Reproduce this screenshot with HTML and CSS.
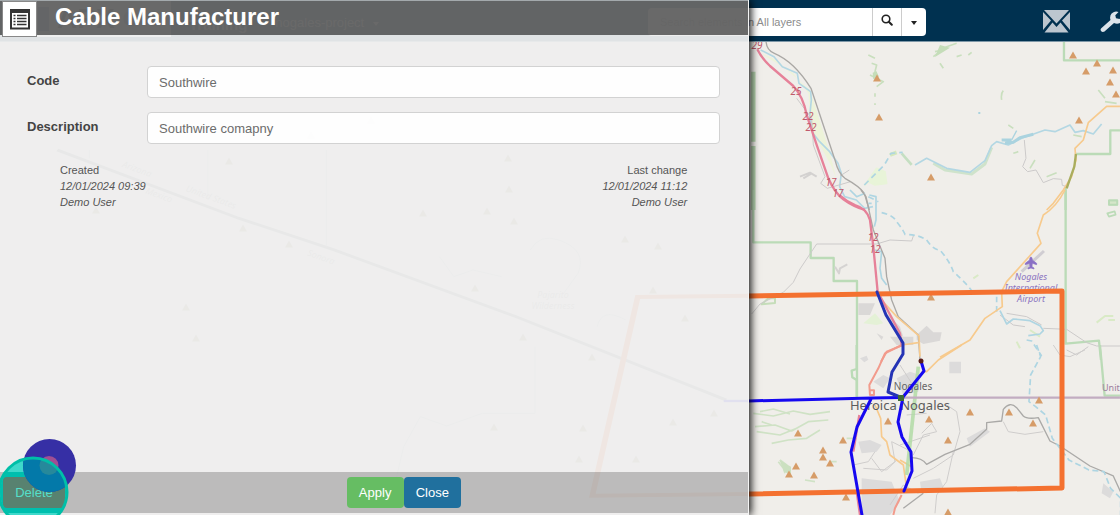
FILE: index.html
```html
<!DOCTYPE html>
<html lang="en">
<head>
<meta charset="utf-8">
<title>Cable Manufacturer</title>
<link rel="stylesheet" href="styles.css">
</head>
<body>
<div class="app">
  <header class="topbar">
    <div class="logo"><span class="logo-mark"></span><span class="logo-name">APX</span><span class="logo-sub">GIS</span></div>
    <a class="nav-link nav-strong" href="#">Training</a>
    <a class="nav-link" href="#">nogales-project <span class="caret"></span></a>
    <form class="search">
      <input class="search-input" type="text" aria-label="Search" placeholder="Search elements in All layers">
      <button class="search-btn" type="button" aria-label="Search"><svg width="12" height="12" viewBox="0 0 12 12"><circle cx="5" cy="5" r="3.8" fill="none" stroke="#222" stroke-width="1.6"/><path d="M7.8 7.8l3 3" stroke="#222" stroke-width="2" stroke-linecap="round"/></svg></button>
      <button class="search-btn search-more" type="button" aria-label="Choose layer"><span class="caret"></span></button>
    </form>
    <nav class="tools">
      <button class="tool" type="button" aria-label="Messages"><svg width="27" height="23" viewBox="0 0 27 23"><path fill="#bcc6cf" d="M1 0h25L13.500 13.500zM0 2l8 8.500L0 20zM27 2l-8 8.500L27 20zM1.500 22.500L9.500 12.500l4 4.500 4-4.500 8 10z"/></svg></button>
      <button class="tool" type="button" aria-label="Settings"><svg width="20" height="22" viewBox="0 0 20 22"><path fill="#dbe3ea" d="M1 17.500L10.500 9Q9 3.500 13.500 1.200Q16 0 18.500 1L15.300 4.300L16 7.300L19.500 8L20 7.500V12Q17 13.400 14 12L4.500 20.500Q2.500 21.500 1 20Q0 18.800 1 17.500z"/></svg></button>
    </nav>
  </header>

  <main class="map">
    <svg class="map-canvas" viewBox="0 42 1120 473" preserveAspectRatio="xMidYMid slice" role="img" aria-label="Map of Nogales">
      <defs><path id="peak" d="M-4 3.500L0-3.500L4 3.500z"/></defs>
      <rect y="42" width="1120" height="473" fill="#f0eeea"/>

      <!-- western area -->
      <g transform="translate(0 150) scale(.4777 .3333)" fill="none" stroke="#bbb">
        <path d="M120 0L500 205L700 300L1080 500L1520 750" stroke="#888" stroke-width="8"/>
        <path d="M187 0v25M435 0v150M683 0v290M1120 590v200h-110l-75 38-55-28-35 90-18 110M1110 300q20-50 60-30 60 30 40 100l-30 60M920 320l30 60 40-20 60 20M1250 530q10-60 60-20" stroke-width="2"/>
        <path d="M1568 437L1335 441L1240 1037L1568 1032" stroke="#f96b2b" stroke-width="12"/>
        <path d="M1515 753h53" stroke="#1208f0" stroke-width="7"/>
      </g>
      <g fill="#a9926f">
        <use href="#peak" x="229" y="161"/><use href="#peak" x="243" y="228"/><use href="#peak" x="289" y="244"/><use href="#peak" x="186" y="307"/><use href="#peak" x="196" y="338"/><use href="#peak" x="508" y="158"/><use href="#peak" x="509" y="189"/><use href="#peak" x="423" y="213"/><use href="#peak" x="487" y="211"/><use href="#peak" x="514" y="221"/><use href="#peak" x="625" y="239"/><use href="#peak" x="658" y="246"/><use href="#peak" x="475" y="288"/><use href="#peak" x="523" y="337"/><use href="#peak" x="592" y="357"/><use href="#peak" x="653" y="290"/><use href="#peak" x="685" y="318"/><use href="#peak" x="494" y="427"/><use href="#peak" x="583" y="428"/><use href="#peak" x="673" y="422"/><use href="#peak" x="579" y="459"/><use href="#peak" x="636" y="459"/><use href="#peak" x="714" y="413"/><use href="#peak" x="96" y="210"/><use href="#peak" x="371" y="120"/><use href="#peak" x="311" y="135"/>
      </g>
      <g class="area-label">
        <text transform="translate(136 172) rotate(20)">Arizona</text>
        <text transform="translate(210 200) rotate(20)">United States</text>
        <text transform="translate(158 198) rotate(20)">Mexico</text>
        <text transform="translate(320 260) rotate(20)">Sonora</text>
        <text x="553" y="298">Pajarito</text><text x="553" y="309">Wilderness</text>
      </g>

      <!-- northern part of the valley -->
      <g transform="translate(740 40) scale(.3333)" fill="none" stroke-linejoin="round">
        <path d="M62 40L160 100L205 160L215 270L275 380L290 420L270 340L210 150L100 55z" fill="#edf3d9"/>
        <path d="M375 435l35-50 25 10 5 35-35 5-20-10z" stroke="#e8f4d8" fill="#e8f4d8" stroke-width="5"/>
        <path d="M40 95V305M40 318V510" stroke="#b5d3ae" stroke-width="13"/>
        <path d="M972 0V61H1140M1140 271H1111V342H1008M977 440V510" stroke="#bbdbb7" stroke-width="7"/>
        <path d="M385 45l20 10M395 70l15 5-5 20 10 15M390 105l40 20-20 15M405 160v10M405 190v5M580 50l40-30 30-10M585 35l25-5M650 50l15-5M600 70l10 15M685 45l10-8M785 180q-3-20 5-28M870 385l15-25M920 410l30-12M805 255l15 10M820 340l15-5M1095 185l35 5M1075 150l20 25M1000 285l25 5" stroke="#c9dfbe" stroke-width="5"/>
        <path d="M600 15l30 8-45 28zM398 98l12-4 6 18-16 6z" fill="#c5ddb9"/>
        <path d="M580 370l35 20 80 12 40-30 20-50" stroke="#cfe3cb" stroke-width="9"/>
        <path d="M485 340l30 35" stroke="#c5dfc2" stroke-width="8"/>
        <path d="M450 345l20-8" stroke="#d5e8bd" stroke-width="12"/>
        <path d="M62 30l40 20 25 30 45 20 5 30 35 25 2 25-5 50 10 50 20 25 30 30 25 35 10 30-5 40 15 30 35 10 25 25 25-5M525 375l35-20 60 30 70 12 45-35 20-45 15-12 35 10 40-20 70-25 30 5 45-20 15 22 25-5 30 10 25-30" stroke="#b3d7e3" stroke-width="5"/>
        <path d="M785 300h30M795 310l25-3 20-14 40-10" stroke="#aad3df" stroke-width="9"/>
        <path d="M815 300l15-28" stroke="#aad3df" stroke-width="4"/>
        <path d="M373 435l25-25 35-35 20-35 35-3M385 470l30 15M385 490h10" stroke="#aed5e2" stroke-width="5" stroke-dasharray="18 12"/>
        <path d="M715 219h6" stroke="#aad3df" stroke-width="6"/>
        <path d="M180 410l30-12 20 12M190 415l25-15" stroke="#d3d1d0" stroke-width="6"/>
        <path d="M170 175l45 60 5 80 35 95-13 20 20 15 70-20M300 408l28-18M853 300l5 55-10 25 15 15 25-5 22 38 30-12 25 2 2 18 18 5" stroke="#cccaca" stroke-width="3"/>
        <path d="M78 0q0 30 25 40 60 25 110 105L285 360q10 40 30 55 45 25 58 45L388 510" stroke="#aaa8a5" stroke-width="4"/>
        <path d="M52 28Q65 55 90 78L160 138Q190 170 200 225L230 315 265 415Q285 460 310 478Q340 500 375 510" stroke="#e68199" stroke-width="7"/>
        <path d="M1140 199h-40L1045 248 1030 300 1005 325 1008 360 995 410 970 450 940 490 920 510" stroke="#f7ca8d" stroke-width="5"/>
        <path d="M1008 342L1003 380 980 445" stroke="#a9ad5e" stroke-width="7"/>
        <rect x="1107" y="481" width="25" height="13" stroke="#bbdbb7" stroke-width="5" fill="#d5e6c9"/>
      </g>

      <!-- central part -->
      <g transform="translate(740 190) scale(.3333)" fill="none" stroke-linejoin="round">
        <path d="M40 0V157H212V204H281V273H351V620M977 0V461L1077 452L1083 510" stroke="#bbdbb7" stroke-width="7"/>
        <path d="M65 343l20-18h20v14z" stroke="#c5ddb9" stroke-width="6"/>
        <path d="M355 340h50l-15 35h-35zM440 370l40 40 10 30-20-10zM450 440h70v25h-50zM530 435l30-28 20 20h25l-5 25-50 10-20-12zM410 430l20 10-5 10z" fill="#dad8d7"/>
        <path d="M285 230l12 20 3-15 22-12" stroke="#d5d3d2" stroke-width="6"/>
        <path d="M370 400l35-30 25 30-20 5z" fill="#e4f1d6"/>
        <path d="M830 455l10 20M870 420l30 20M1070 398l25-20h25M1105 390h20M700 265l15-10" stroke="#d9eac6" stroke-width="6"/>
        <path d="M1107 31h25v14h-25zM1102 70l22-6 3 10-20 6z" stroke="#bbdbb7" stroke-width="5"/>
        <path d="M35 372l25-30 70-35 30-30 20-40 50-75h180l40-12 65 3 5-15M780 375l40 30 35 5M910 415l70 3 60 40 30 10h70M800 370l60 10 45 25M980 480l30 15 35-25" stroke="#cccaca" stroke-width="3"/>
        <path d="M330 0l20 20 25-10M388 15l20 5 0 70-5 20M405 180l20 5-5 50 5 30 15 20" stroke="#aed5e2" stroke-width="5"/>
        <path d="M425 68Q460 75 470 95Q490 120 495 133Q540 135 560 150Q580 180 600 180Q630 215 640 245Q690 290 700 310M770 320V370M860 450l15 3 30 45" stroke="#aed5e2" stroke-width="5" stroke-dasharray="17 11"/>
        <path d="M780 362l20 40 20-15 50 5 30 15 10 15-10 10-35 5" stroke="#aed5e2" stroke-width="5"/>
        <path d="M363 0L378 20 400 120 435 205 440 260 455 330 475 380 535 435 540 510" stroke="#aaa8a5" stroke-width="4"/>
        <path d="M975 0Q950 50 910 75L892 130 903 160 800 275 785 305 787 350 735 385 690 450 600 502M425 330L470 380 537 438 540 500M485 465l50-7" stroke="#f7ca8d" stroke-width="5"/>
        <path d="M300 17Q320 35 345 45Q380 55 390 90L400 170 413 305L480 430 485 465" stroke="#e68199" stroke-width="7"/>
        <path d="M485 467l-45 18-17 30" stroke="#f29b8c" stroke-width="6"/>
        <path d="M845 245L912 183" stroke="#d0cdd2" stroke-width="9"/>
        <path d="M873 201q4 0 4 9l13 10v4l-13-4-1 10 6 4v3l-9-3-9 3v-3l6-4-1-10-13 4v-4l13-10q0-9 4-9z" fill="#8a70c5" stroke="#8a70c5" stroke-width="2"/>
      </g>

      <!-- city and border -->
      <g transform="translate(740 345) scale(.3333)" fill="none" stroke-linejoin="round">
        <path d="M350 0V72l-15 5 2 20 13 8v50M1080 0L1094 152H1140" stroke="#bbdbb7" stroke-width="7"/>
        <path d="M628 50h35v35h-35zM400 110l30-20 20 10-20 30zM470 100l40-20 30 10-5 50-45 10zM360 40l20-8 5 12-12 8zM355 290l35-5 35 15-15 20-45 5zM365 400l90 10 25 60-30 40h-85zM680 280l55-30 15 10-60 45zM540 410l60-10 10 25-65 20zM1090 415l30 25-10 20-25-15z" fill="#dcdbdb"/>
        <path d="M40 205l60 8 60-15 50 10 60-8M45 245l60-5 50 18 50-28 60-5M50 260l70 10 50-20M95 295l50-10 55-5 40-25M60 200l40-8 50 15M120 345l20 15 10 30M115 350l15 20 5 15M195 405l30 5M270 350h20M320 280h30M65 230l30 10" stroke="#cfe2c5" stroke-width="5"/>
        <path d="M118 345l35 20v25l-20-10z" fill="#cbe0c0"/>
        <path d="M395 340l30 40 40-30-10-60 60 30M405 320l-20 30-45 10M370 370l70 5 30-30M480 300l90-30M520 330l30-60 40-10-15-25-30 30M520 400l60-30 60-40 20-70-10-60-30-20M640 320l-20 90-30 40-5 55M790 230l15 30 50 8 55-8M480 60l45 70M500 210l60-5M450 480l40-60 45 25M940 0l20 30 30 5 45-20" stroke="#cfcdcc" stroke-width="3"/>
        <path d="M515 338q30 0 45 20l55-30 75-30 50-45v-20l45-5 5-35q20-25 40-5l20 25q10 10 45 5l35 70 30 15 90 60 70 30 25 55v35M490 490l60-45" stroke="#aaa9a7" stroke-width="4"/>
        <path d="M665 0L595 45 560 80 545 80M405 180L422 220 425 275 440 290 450 330 490 360 500 430M480 345l35 20" stroke="#f7ca8d" stroke-width="5"/>
        <path d="M485 0L435 25 415 70 388 120 390 150 402 150V136H390M485 450L465 490 460 510" stroke="#f29b8c" stroke-width="6"/>
        <path d="M535 65L500 390" stroke="#b2daa6" stroke-width="11" opacity=".85"/>
        <path d="M890 0l12 35-30 55-5 80 20 15 30 25 20 70 50 65 60 30 45 5 20 50 30 30v50" stroke="#aed5e2" stroke-width="5" stroke-dasharray="18 10"/>
        <path d="M480 158H1140" stroke="#c2acc1" stroke-width="7"/>
        <path d="M350 440l10 70M358 210L340 320" stroke="#e68199" stroke-width="7"/>
      </g>

      <g fill="#d69c68">
        <use href="#peak" x="877" y="78"/><use href="#peak" x="879" y="117"/><use href="#peak" x="931" y="177"/><use href="#peak" x="1073" y="55"/><use href="#peak" x="1097" y="63"/><use href="#peak" x="1086" y="71"/><use href="#peak" x="1113" y="70"/><use href="#peak" x="1110" y="82"/><use href="#peak" x="1116" y="94"/><use href="#peak" x="1079" y="120"/><use href="#peak" x="931" y="297"/><use href="#peak" x="1039" y="400"/><use href="#peak" x="970" y="412"/><use href="#peak" x="1009" y="412"/><use href="#peak" x="1033" y="423"/><use href="#peak" x="929" y="419"/><use href="#peak" x="888" y="421"/><use href="#peak" x="948" y="440"/><use href="#peak" x="843" y="440"/><use href="#peak" x="798" y="433"/><use href="#peak" x="823" y="450"/><use href="#peak" x="823" y="457"/><use href="#peak" x="830" y="463"/><use href="#peak" x="796" y="466"/><use href="#peak" x="789" y="474"/><use href="#peak" x="814" y="475"/><use href="#peak" x="846" y="497"/><use href="#peak" x="948" y="512"/>
      </g>

      <g class="road-number">
        <text x="757" y="49">29</text><text x="796" y="95">25</text><text x="808" y="120">22</text><text x="811" y="131">22</text><text x="831" y="186">17</text><text x="838" y="197">17</text><text x="873" y="241">12</text><text x="875" y="253">12</text>
      </g>
      <g class="airport-label"><text x="1031" y="280">Nogales</text><text x="1031" y="291">International</text><text x="1031" y="302">Airport</text></g>
      <text class="country-label" x="1102" y="391">Unit</text>
      <text class="town-label" x="913" y="390">Nogales</text>
      <text class="city-label" x="900" y="410">Heroica Nogales</text>

      <!-- project overlay -->
      <g fill="none" stroke-linejoin="round" stroke-linecap="round">
        <path d="M748 296L1062 291V488L748 494" stroke="#f47130" stroke-width="5"/>
        <path d="M748 401L872 398L901 397.500M921 361L924 371L903 397L898 422L902 437L911 452L912 471L904 491M871 399L857 427L851 452L862 515" stroke="#1608f0" stroke-width="3"/>
        <path d="M877 292L886 315L903 343V354L892 372L888 392L900 397" stroke="#2534b5" stroke-width="3"/>
      </g>
      <rect x="898" y="395" width="6" height="6" fill="#3e6b35"/>
      <circle cx="921" cy="361" r="2.500" fill="#591c18"/>
    </svg>
  </main>

  <section class="panel" aria-labelledby="panel-title">
    <div class="panel-head">
      <span class="panel-icon"><svg width="20" height="22" viewBox="0 0 20 22"><path d="M1 2.500h18v18H1z" fill="#fff" stroke="#333" stroke-width="2"/><path d="M0 1h20v4H0z" fill="#333"/><path d="M3.500 7.500h2M7 7.500h9.500M3.500 10.500h2M7 10.500h9.500M3.500 13.500h2M7 13.500h9.500M3.500 16.500h2M7 16.500h9.500" stroke="#333" stroke-width="1.500"/></svg></span>
      <h1 class="panel-title" id="panel-title">Cable Manufacturer</h1>
    </div>
    <form class="panel-body">
      <div class="field"><label class="field-label" for="code">Code</label><input class="field-input" id="code" type="text" value="Southwire"></div>
      <div class="field"><label class="field-label" for="description">Description</label><input class="field-input" id="description" type="text" value="Southwire comapny"></div>
      <div class="history">
        <div class="stamp">Created<em>12/01/2024 09:39</em><em>Demo User</em></div>
        <div class="stamp stamp-end">Last change<em>12/01/2024 11:12</em><em>Demo User</em></div>
      </div>
    </form>
    <div class="panel-foot">
      <svg class="halo" width="80" height="80" viewBox="0 0 80 80"><defs><clipPath id="disc"><circle cx="33" cy="57" r="33"/></clipPath></defs><g clip-path="url(#disc)"><rect width="80" height="80" fill="#3fd9cb"/><rect y="37" width="80" height="41" fill="#00bfae"/></g></svg>
      <button class="btn btn-delete" type="button">Delete</button>
      <div class="foot-main">
        <button class="btn btn-apply" type="button">Apply</button>
        <button class="btn btn-close" type="button">Close</button>
      </div>
      <svg class="pointer" width="80" height="80" viewBox="0 0 80 80"><circle cx="49.500" cy="30.500" r="26.500" fill="#362fa5"/><circle cx="49" cy="30.500" r="9.500" fill="#a04f93"/><g clip-path="url(#disc)"><circle cx="49.500" cy="30.500" r="26.500" fill="#0379a9"/><circle cx="49" cy="30.500" r="9.500" fill="#26899b"/></g><circle cx="33" cy="57" r="34" fill="none" stroke="#00bfa8" stroke-width="3"/></svg>
    </div>
  </section>
</div>
</body>
</html>
```
FILE: styles.css
```css
* { box-sizing: border-box; }
body { margin: 0; font-family: "Liberation Sans", Arial, sans-serif; font-size: 13px; color: #555; }
button, input { font: inherit; }
.app { position: relative; display: flex; flex-direction: column; height: 100vh; overflow: hidden; }

.topbar { flex: none; display: flex; align-items: center; height: 42px; padding-left: 37px; background: #003150; border-bottom: 1px solid #7f98a8; }
.logo { flex: none; display: flex; align-items: center; gap: 8px; align-self: flex-start; width: 134px; height: 37px; padding-left: 1px; background: #fff; color: #222; font-size: 28px; font-weight: bold; }
.logo-mark { width: 11px; height: 24px; background: #3d7fae; }
.logo-sub { color: #8a9aa5; font-size: 22px; }
.nav-link { margin-left: 18px; padding-top: 4px; color: #fff; text-decoration: none; white-space: nowrap; }
.nav-strong { padding-top: 8px; font-size: 15px; font-weight: bold; }
.nav-link + .nav-link { margin-left: 28px; }
.caret { display: inline-block; margin-left: 5px; border: 3px solid transparent; border-top: 4px solid; border-bottom: 0; vertical-align: middle; }
.search { display: flex; width: 278px; height: 28px; margin-top: 2px; margin-left: auto; overflow: hidden; border-radius: 4px; background: #fff; }
.search-input { flex: 1; min-width: 0; padding: 0 12px; border: 0; background: none; font-size: 11px; }
.search-input::placeholder { color: #8c8c8c; opacity: 1; }
.search-btn { width: 29px; padding: 0; border: 0; border-left: 1px solid #ccc; background: none; color: #222; }
.search-more { width: 25px; }
.search-more .caret { margin: 0; }
.tools { display: flex; align-items: center; gap: 30px; margin-left: 117px; padding-top: 2px; }
.tool { display: flex; padding: 0; border: 0; background: none; }

.map { flex: 1; min-height: 0; background: #f0eeea; }
.map-canvas { display: block; width: 100%; height: 100%; font-family: "Noto Sans", sans-serif; text-anchor: middle; }
.road-number { font-size: 10px; font-style: italic; fill: #c05a6b; }
.area-label { font-size: 9px; font-style: italic; fill: #a99; }
.airport-label { font-size: 9px; font-style: italic; fill: #8b73c0; }
.country-label { font-size: 9px; text-anchor: start; fill: #9d7f9e; }
.town-label { font-size: 10px; fill: #666; }
.city-label { font-size: 13px; fill: #5c5c5c; }

.panel { position: absolute; top: 0; bottom: 0; left: 0; display: flex; flex-direction: column; width: 66.9%; padding-bottom: 2px; background: rgba(238, 238, 238, .94); border-right: 1px solid #f4f4f4; box-shadow: 2px 0 8px 0 rgba(0, 0, 0, .95); }
.panel-head { display: flex; align-items: flex-start; gap: 18px; height: 35px; padding-left: 2px; background: rgba(0, 0, 0, .56); border-top: 1px solid #a3a9ac; }
.panel-icon { display: flex; align-items: center; justify-content: center; width: 35px; height: 36px; background: #fff; border: 1px solid #888; }
.panel-title { margin: 0; font-size: 24px; line-height: 32px; color: #fff; }
.panel-body { flex: 1; display: flex; flex-direction: column; gap: 14px; padding: 31px 28px 0 27px; }
.field { display: grid; grid-template-columns: 120px 1fr; }
.field-label { padding-top: 7px; font-weight: bold; line-height: 16px; color: #444; }
.field-input { width: 100%; height: 32px; padding: 0 11px; border: 1px solid #d2d2d2; border-radius: 4px; background: rgba(255, 255, 255, .9); color: #6c6c6c; }
.history { display: flex; justify-content: space-between; padding: 4px 33px 0; font-size: 11px; line-height: 16px; }
.stamp em { display: block; }
.stamp-end { text-align: right; }

.panel-foot { position: relative; display: flex; align-items: center; height: 41px; padding: 0 6px 0 3px; background: rgba(0, 0, 0, .21); }
.halo, .pointer { position: absolute; left: 0; bottom: -2px; pointer-events: none; }
.btn { position: relative; height: 31px; padding: 0 12px; border: 0; border-radius: 4px; color: #fff; }
.btn-delete { width: 62px; background: #588270; color: #55dfca; }
.foot-main { flex: 1; display: flex; justify-content: center; }
.btn-apply { width: 57px; background: #66bd63; }
.btn-close { width: 57px; background: #20709e; }
```
